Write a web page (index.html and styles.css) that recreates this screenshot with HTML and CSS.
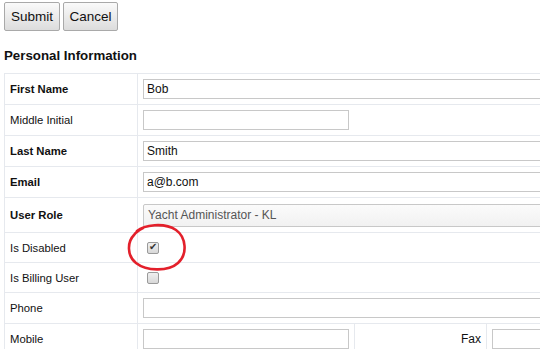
FILE: index.html
```html
<!DOCTYPE html>
<html lang="en">

<head>
    <meta charset="UTF-8">
    <meta name="viewport" content="width=device-width, initial-scale=1.0">
    <title>Edit User</title>
    <link rel="stylesheet" href="styles.css">
</head>

<body>
    <div class="actions">
        <button class="btn submit">Submit</button>
        <button class="btn cancel">Cancel</button>
    </div>

    <h3 class="section-title">Personal Information</h3>

    <div class="form-wrap">
        <table class="form-table">
            <colgroup>
                <col class="col-label">
                <col class="col-value">
                <col class="col-label2">
                <col class="col-value2">
            </colgroup>
            <tr>
                <td class="label required">First Name</td>
                <td colspan="3"><input class="field wide" type="text" value="Bob"></td>
            </tr>
            <tr>
                <td class="label">Middle Initial</td>
                <td colspan="3"><input class="field short" type="text" value=""></td>
            </tr>
            <tr>
                <td class="label required">Last Name</td>
                <td colspan="3"><input class="field wide" type="text" value="Smith"></td>
            </tr>
            <tr>
                <td class="label required">Email</td>
                <td colspan="3"><input class="field wide" type="text" value="a@b.com"></td>
            </tr>
            <tr class="select-row">
                <td class="label required">User Role</td>
                <td colspan="3">
                    <div class="select-box">Yacht Administrator - KL</div>
                </td>
            </tr>
            <tr class="check-row">
                <td class="label">Is Disabled</td>
                <td colspan="3"><span class="check checked"></span></td>
            </tr>
            <tr class="check-row">
                <td class="label">Is Billing User</td>
                <td colspan="3"><span class="check"></span></td>
            </tr>
            <tr>
                <td class="label">Phone</td>
                <td colspan="3"><input class="field wide" type="text" value=""></td>
            </tr>
            <tr>
                <td class="label">Mobile</td>
                <td><input class="field short" type="text" value=""></td>
                <td class="label right">Fax</td>
                <td><input class="field wide" type="text" value=""></td>
            </tr>
        </table>

        <!-- hand-drawn marker around the disabled checkbox -->
        <svg class="scribble" width="70" height="60" viewBox="0 0 70 60">
            <path d="M13 9 C 20 3, 40 0, 52 8 C 62 15, 64 32, 54 41 C 44 50, 22 49, 12 41 C 3 34, 3 20, 10 13 C 12 10, 15 8, 19 6"
                fill="none" stroke="#e3202b" stroke-width="2.6" stroke-linecap="round" />
        </svg>
    </div>
</body>

</html>
```

FILE: styles.css
```css
* {
    box-sizing: border-box;
}

body {
    margin: 0;
    padding: 2px 4px;
    font-family: Arial, 'Liberation Sans', Helvetica, sans-serif;
    color: #111;
    background: #fff;
    overflow: hidden;
}

.actions {
    display: flex;
    gap: 3px;
}

.btn {
    height: 29px;
    padding: 0;
    font-family: inherit;
    font-size: 13.5px;
    color: #111;
    background: linear-gradient(#fafafa, #dcdcdc);
    border: 1px solid #a9a9a9;
    border-radius: 2px;
}

.btn.submit {
    width: 56px;
}

.btn.cancel {
    width: 55px;
}

.section-title {
    margin: 16px 0 0;
    height: 26px;
    font-size: 13.3px;
    font-weight: bold;
    line-height: 18px;
}

.form-wrap {
    position: relative;
    width: 680px;
}

.form-table {
    width: 680px;
    table-layout: fixed;
    border-collapse: collapse;
    border: 1px solid #e6e9ee;
}

.col-label {
    width: 133px;
}

.col-value {
    width: 217px;
}

.col-label2 {
    width: 132px;
}

.form-table td {
    border: 1px solid #e6e9ee;
    padding: 5px;
    height: 31px;
    vertical-align: middle;
    font-size: 11.3px;
}

.label {
    color: #111;
}

.label.required {
    font-weight: bold;
}

.label.right {
    text-align: right;
    font-size: 12px;
}

.field {
    display: block;
    height: 20px;
    padding: 0 3px;
    border: 1px solid #c8c8c8;
    font-family: inherit;
    font-size: 12px;
    color: #111;
    background: #fff;
    outline: none;
}

.field.wide {
    width: 100%;
}

.field.short {
    width: 206px;
}

.select-row td {
    height: 35px;
}

.select-box {
    height: 23px;
    line-height: 21px;
    padding: 0 4px;
    border: 1px solid #c8c8c8;
    border-radius: 2px;
    background: linear-gradient(#fbfbfb, #f1f1f1);
    color: #555;
    font-size: 12px;
}

.check-row td {
    height: 30px;
}

.check {
    display: block;
    margin-left: 4px;
    width: 12px;
    height: 12px;
    border: 1px solid #9a9a9a;
    border-radius: 2px;
    background: linear-gradient(#f0f0f0, #d8d8d8);
    position: relative;
}

.check.checked::after {
    content: "✔";
    position: absolute;
    left: 1px;
    top: -2px;
    font-family: 'DejaVu Sans', sans-serif;
    font-size: 10px;
    color: #333;
}

.scribble {
    position: absolute;
    left: 120px;
    top: 149px;
    pointer-events: none;
}
```
